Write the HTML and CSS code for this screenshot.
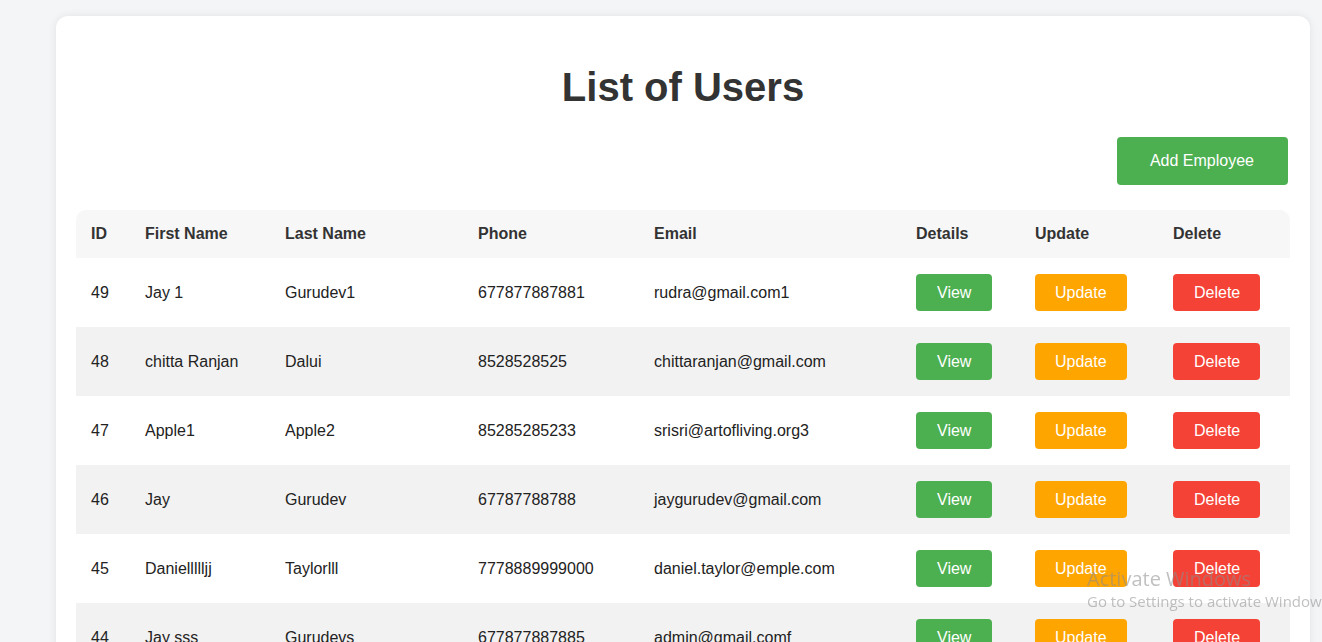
FILE: index.html
```html
<!DOCTYPE html>
<html lang="en">
<head>
<meta charset="utf-8">
<title>List of Users</title>
<link rel="stylesheet" href="styles.css">
</head>
<body>
<main class="card">
  <h1 class="title">List of Users</h1>
  <div class="toolbar">
    <button class="btn btn-add">Add Employee</button>
  </div>
  <table class="users">
    <colgroup>
      <col class="c-id"><col class="c-first"><col class="c-last"><col class="c-phone"><col class="c-email"><col class="c-details"><col class="c-update"><col class="c-delete">
    </colgroup>
    <thead>
      <tr><th>ID</th><th>First Name</th><th>Last Name</th><th>Phone</th><th>Email</th><th>Details</th><th>Update</th><th>Delete</th></tr>
    </thead>
    <tbody>
      <tr><td>49</td><td>Jay 1</td><td>Gurudev1</td><td>677877887881</td><td>rudra@gmail.com1</td><td><button class="btn btn-view">View</button></td><td><button class="btn btn-update">Update</button></td><td><button class="btn btn-delete">Delete</button></td></tr>
      <tr><td>48</td><td>chitta Ranjan</td><td>Dalui</td><td>8528528525</td><td>chittaranjan@gmail.com</td><td><button class="btn btn-view">View</button></td><td><button class="btn btn-update">Update</button></td><td><button class="btn btn-delete">Delete</button></td></tr>
      <tr><td>47</td><td>Apple1</td><td>Apple2</td><td>85285285233</td><td>srisri@artofliving.org3</td><td><button class="btn btn-view">View</button></td><td><button class="btn btn-update">Update</button></td><td><button class="btn btn-delete">Delete</button></td></tr>
      <tr><td>46</td><td>Jay</td><td>Gurudev</td><td>67787788788</td><td>jaygurudev@gmail.com</td><td><button class="btn btn-view">View</button></td><td><button class="btn btn-update">Update</button></td><td><button class="btn btn-delete">Delete</button></td></tr>
      <tr><td>45</td><td>Daniellllljj</td><td>Taylorlll</td><td>7778889999000</td><td>daniel.taylor@emple.com</td><td><button class="btn btn-view">View</button></td><td><button class="btn btn-update">Update</button></td><td><button class="btn btn-delete">Delete</button></td></tr>
      <tr><td>44</td><td>Jay sss</td><td>Gurudevs</td><td>677877887885</td><td>admin@gmail.comf</td><td><button class="btn btn-view">View</button></td><td><button class="btn btn-update">Update</button></td><td><button class="btn btn-delete">Delete</button></td></tr>
    </tbody>
  </table>
</main>
<div class="watermark">
  <div class="wm-title">Activate Windows</div>
  <div class="wm-sub">Go to Settings to activate Windows.</div>
</div>
</body>
</html>
```
FILE: styles.css
```css
html, body {
  margin: 0;
  padding: 0;
}
body {
  background: #f3f5f6;
  font-family: "Liberation Sans", Arial, sans-serif;
  color: #222;
  padding: 16px 12px 0 56px;
  overflow: hidden;
  height: 642px;
  box-sizing: border-box;
}
.card {
  background: #fff;
  border-radius: 12px;
  box-shadow: 0 0 8px rgba(0, 0, 0, 0.08);
  padding: 48px 20px 20px;
}
.title {
  margin: 0;
  text-align: center;
  font-size: 40px;
  line-height: 46px;
  font-weight: bold;
  color: #333;
}
.toolbar {
  display: flex;
  justify-content: flex-end;
  margin: 27px 0 25px;
}
.btn {
  font-family: "Liberation Sans", Arial, sans-serif;
  font-size: 16px;
  line-height: 19px;
  color: #fff;
  border: none;
  border-radius: 4px;
  padding: 9px 20px;
  cursor: pointer;
  display: block;
}
.btn-add {
  background: #4caf50;
  padding: 15px 34px 15px 33px;
  line-height: 18px;
  margin-right: 2px;
}
.btn-view { background: #4caf50; padding: 9px 21px; }
.btn-update { background: #ffa500; }
.btn-delete { background: #f44336; padding: 9px 20px 9px 21px; }

.users {
  width: 100%;
  border-collapse: separate;
  border-spacing: 0;
  table-layout: fixed;
  font-size: 16px;
}
.c-id { width: 54px; }
.c-first { width: 140px; }
.c-last { width: 193px; }
.c-phone { width: 176px; }
.c-email { width: 262px; }
.c-details { width: 119px; }
.c-update { width: 138px; }
.c-delete { width: 132px; }

.users th {
  background: #f7f7f7;
  color: #333;
  font-weight: bold;
  text-align: left;
  padding: 15px;
  line-height: 18px;
}
.users th:first-child { border-top-left-radius: 10px; }
.users th:last-child { border-top-right-radius: 10px; }
.users td {
  padding: 16px 15px;
  line-height: 19px;
  color: #222;
  white-space: nowrap;
  vertical-align: middle;
}
.users tbody tr:nth-child(even) td { background: #f2f2f2; }

.watermark {
  position: fixed;
  left: 1087px;
  top: 566px;
  font-family: "Open Sans", "DejaVu Sans", sans-serif;
  color: rgba(140, 140, 140, 0.55);
  white-space: nowrap;
  pointer-events: none;
}
.wm-title {
  font-size: 20px;
  line-height: 25px;
}
.wm-sub {
  font-size: 15px;
  line-height: 20px;
  margin-top: 0;
}
```
